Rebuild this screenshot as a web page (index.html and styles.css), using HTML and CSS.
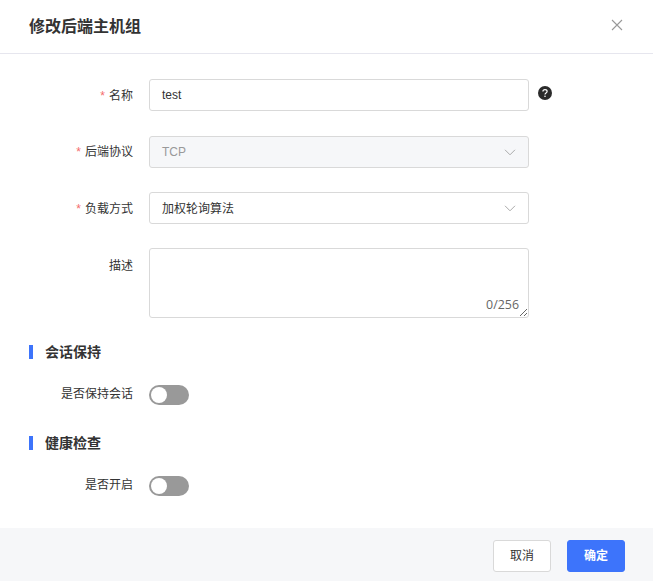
FILE: index.html
```html
<!DOCTYPE html>
<html lang="zh-CN">
<head>
<meta charset="utf-8">
<title>修改后端主机组</title>
<link rel="stylesheet" href="styles.css">
</head>
<body>
<div class="dialog">
  <header class="header">
    <h1 class="title">修改后端主机组</h1>
    <svg class="close" width="12" height="12" viewBox="0 0 12 12"><path d="M1 1l10 10M11 1L1 11" stroke="#999" stroke-width="1.1" fill="none"/></svg>
  </header>
  <main class="body">
    <div class="row row-name">
      <label class="label"><span class="req">*</span>名称</label>
      <div class="control input">test</div>
      <svg class="help" width="14" height="14" viewBox="0 0 14 14"><circle cx="7" cy="7" r="7" fill="#2b2b2b"/><path d="M4.900 5.500C4.900 4.300 5.800 3.600 7 3.600s2.100.7 2.100 1.800c0 1.600-2.100 1.500-2.100 3" stroke="#fff" stroke-width="1.200" fill="none"/><circle cx="7" cy="10.200" r=".8" fill="#fff"/></svg>
    </div>
    <div class="row row-proto">
      <label class="label label-proto"><span class="req">*</span>后端协议</label>
      <div class="control input select disabled">TCP<svg class="chev" width="12" height="7" viewBox="0 0 12 7"><path d="M1 .8L6 5.800l5-5" stroke="#aaa" fill="none"/></svg></div>
    </div>
    <div class="row row-load">
      <label class="label"><span class="req">*</span>负载方式</label>
      <div class="control input select">加权轮询算法<svg class="chev" width="12" height="7" viewBox="0 0 12 7"><path d="M1 .8L6 5.800l5-5" stroke="#aaa" fill="none"/></svg></div>
    </div>
    <div class="row row-desc">
      <label class="label label-desc">描述</label>
      <div class="area-wrap">
        <textarea class="area"></textarea>
        <span class="count">0/256</span>
      </div>
    </div>
    <h2 class="section sec-first">会话保持</h2>
    <div class="row row-switch">
      <label class="label label-switch">是否保持会话</label>
      <span class="switch"><span class="knob"></span></span>
    </div>
    <h2 class="section sec-second">健康检查</h2>
    <div class="row row-switch">
      <label class="label label-switch">是否开启</label>
      <span class="switch"><span class="knob"></span></span>
    </div>
  </main>
  <footer class="footer">
    <button class="btn">取消</button>
    <button class="btn primary">确定</button>
  </footer>
</div>
</body>
</html>
```
FILE: styles.css
```css
* { box-sizing: border-box; }
html, body { margin: 0; padding: 0; height: 100%; background: #fff; overflow: hidden; }
body { font-family: "Liberation Sans", "Noto Sans CJK SC", sans-serif; font-size: 12px; color: #333; }
.dialog { width: 653px; height: 581px; display: flex; flex-direction: column; }
.header { height: 54px; flex: none; padding: 0 30px 0 29px; display: flex; align-items: center; justify-content: space-between; border-bottom: 1px solid #e6e6ee; }
.title { margin: 0; font-size: 16px; font-weight: 700; color: #333; line-height: 50px; }
.close { margin-top: -3px; }
.body { flex: 1; padding: 25px 0 0 0; }
.row { display: flex; align-items: flex-start; }
.label { width: 133px; height: 32px; flex: none; margin-right: 16px; padding-top: 1px; text-align: right; color: #333; line-height: 32px; }
.label-proto { padding-top: 0; }
.label-desc { padding-top: 2px; }
.label-switch { padding-top: 0; height: 20px; line-height: 18px; }
.req { color: #f56c6c; margin-right: 4px; }
.control { width: 380px; height: 32px; flex: none; }
.input { border: 1px solid #d9d9d9; border-radius: 3px; padding: 0 12px; line-height: 29px; color: #333; background: #fff; }
.row-name .input { line-height: 30px; }
.select { display: flex; align-items: center; justify-content: space-between; padding-right: 12px; }
.row-load .input { padding-top: 2px; }
.row-load .chev { margin-top: -2px; }
.disabled { background: #f6f7f9; color: #999; }
.chev { flex: none; margin-right: 0; }
.help { margin-left: 9px; margin-top: 7px; }
.row-proto { margin-top: 25px; }
.row-load { margin-top: 24px; }
.row-desc { margin-top: 24px; }
.area-wrap { position: relative; width: 380px; height: 70px; }
.area { display: block; width: 380px; height: 70px; margin: 0; border: 1px solid #d9d9d9; border-radius: 3px; background: #fff; outline: none; resize: both; }
.count { position: absolute; right: 10px; bottom: 5px; color: #666; line-height: 16px; font-size: 12.4px; font-family: "Open Sans", sans-serif; }
.section { margin: 0 0 0 29px; padding-left: 12px; border-left: 4px solid #3d74fb; font-size: 14px; font-weight: 700; color: #333; line-height: 14px; height: 14px; }
.sec-first { margin-top: 27px; }
.sec-second { margin-top: 31px; }
.row-switch { margin-top: 26px; height: 20px; }
.switch { width: 40px; height: 20px; flex: none; border-radius: 10px; background: #999; padding: 2px; display: block; }
.knob { width: 16px; height: 16px; border-radius: 50%; background: #fff; display: block; }
.footer { height: 53px; flex: none; background: #f6f7f9; display: flex; justify-content: flex-end; align-items: flex-start; padding: 12px 28px 0 0; gap: 16px; }
.btn { width: 58px; height: 32px; border: 1px solid #d9d9d9; border-radius: 3px; background: #fff; color: #333; font: inherit; padding: 0 0 3px; }
.primary { background: #3d74fb; border-color: #3d74fb; color: #fff; font-weight: 700; }
```
